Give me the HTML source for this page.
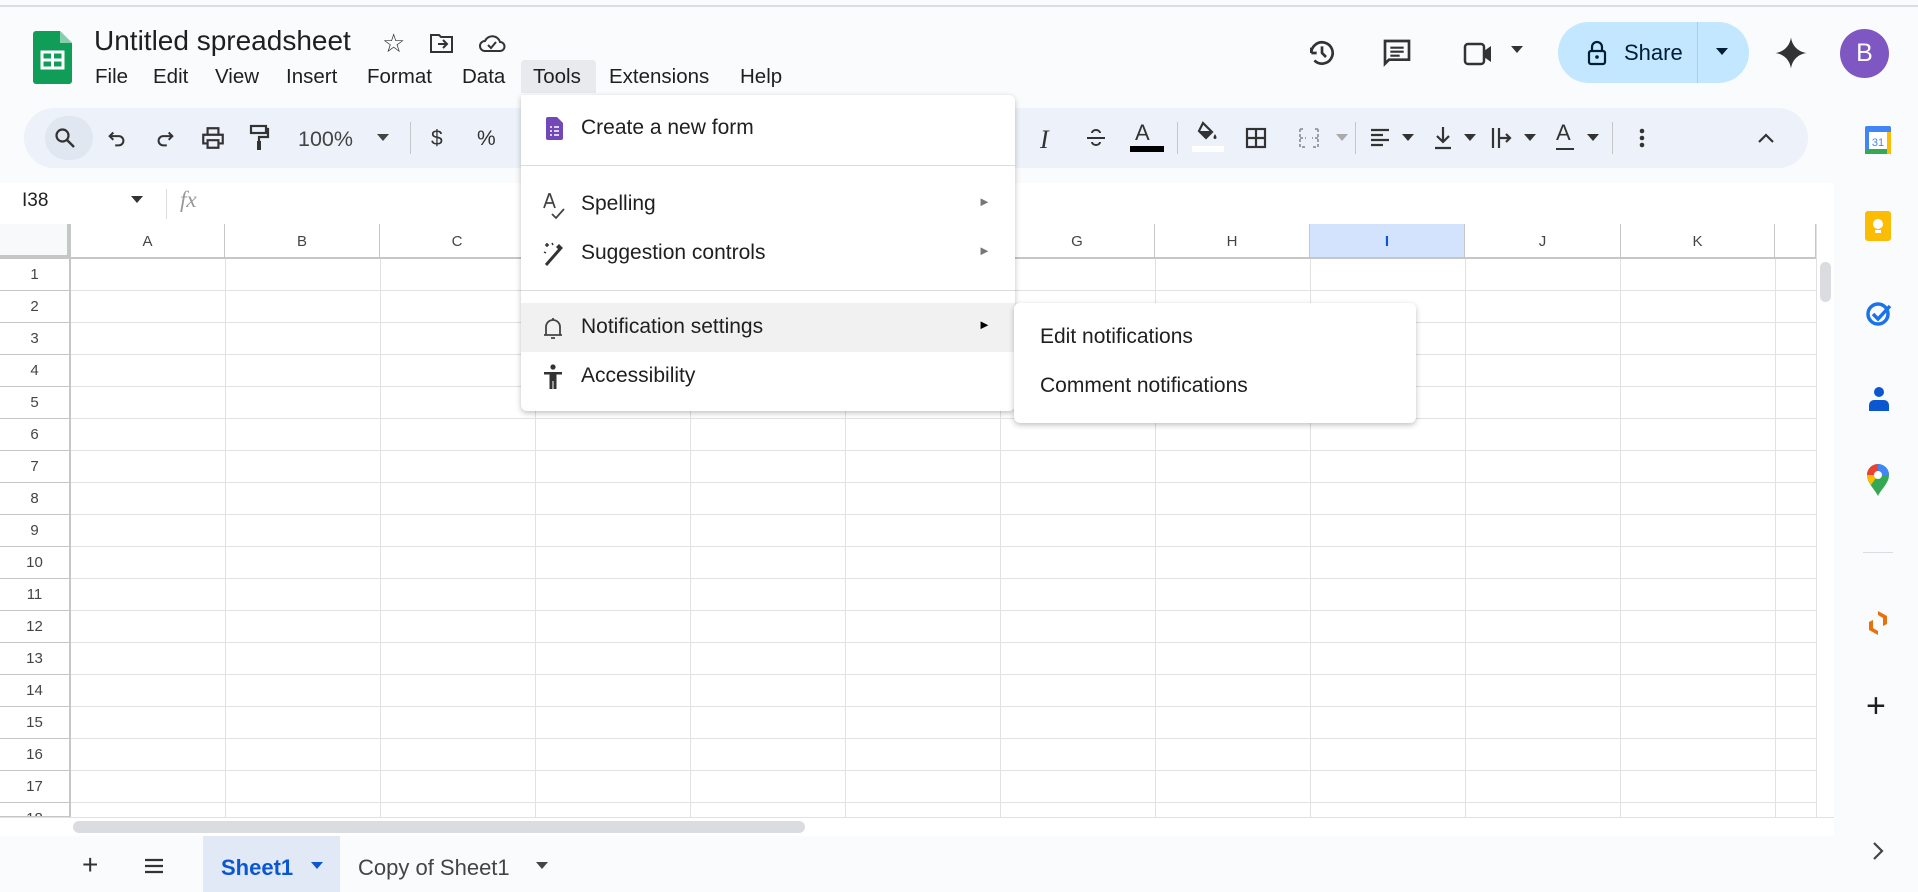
<!DOCTYPE html>
<html><head><meta charset="utf-8"><style>
*{box-sizing:border-box;margin:0;padding:0}
body{width:1918px;height:892px;overflow:hidden;background:#f9fbfd;font-family:"Liberation Sans",Arial,sans-serif;color:#1f1f1f;position:relative}
.a{position:absolute}
.menu span{position:absolute;top:65px;font-size:20.5px;color:#1f1f1f}
.tb{position:absolute;top:138px;transform:translate(-50%,-50%)}
.grid{position:absolute;left:71px;top:259px;width:1745px;height:558px;background:#fff;
background-image:repeating-linear-gradient(to right,transparent 0,transparent 154px,#e1e1e1 154px,#e1e1e1 155px),repeating-linear-gradient(to bottom,transparent 0,transparent 31px,#e1e1e1 31px,#e1e1e1 32px)}
.ch{position:absolute;top:224px;height:35px;font-size:15px;color:#444;text-align:center;line-height:35px;border-right:1px solid #c4c7c5;border-bottom:2px solid #c4c7c5;background:#fff}
.rh{position:absolute;left:0;width:71px;height:32px;font-size:15px;color:#444;text-align:center;line-height:31px;border-bottom:1px solid #c4c7c5;border-right:2px solid #c4c7c5;background:#fff}
.mi{position:absolute;left:0;width:100%;font-size:21px;color:#1f1f1f}
.mi b{font-weight:normal;position:absolute;left:60px}
</style></head><body>
<div class="a" style="left:0;top:5px;width:1918px;height:2px;background:#dadce0"></div>
<svg class="a" style="left:33px;top:31px" width="39" height="53" viewBox="0 0 39 53"><path d="M3 0h24l12 12v38a3 3 0 0 1-3 3H3a3 3 0 0 1-3-3V3a3 3 0 0 1 3-3z" fill="#0f9d58"/><path d="M27 0v12h12z" fill="#87ceac"/><rect x="9" y="21" width="21" height="16" fill="none" stroke="#fff" stroke-width="3"/><path d="M19.5 21v16M9 29h21" stroke="#fff" stroke-width="3"/></svg>
<div class="a" style="left:94px;top:25px;font-size:28px;color:#1f1f1f">Untitled spreadsheet</div>
<div class="a" style="left:382px;top:28px;font-size:26px;color:#333">☆</div>
<svg class="a" style="left:429px;top:32px" width="26" height="22" viewBox="0 0 26 22"><path d="M2 3h8l2 2h11v15H2z" fill="none" stroke="#333" stroke-width="2"/><path d="M9 12h9M14 8l4 4-4 4" fill="none" stroke="#333" stroke-width="2"/></svg>
<svg class="a" style="left:478px;top:31px" width="28" height="22" viewBox="0 0 28 22"><path d="M7 20a5 5 0 0 1 0-10 8 8 0 0 1 15 1 4.5 4.5 0 0 1 0 9z" fill="none" stroke="#333" stroke-width="2"/><path d="M10 14l3 3 5-6" fill="none" stroke="#333" stroke-width="2"/></svg>
<div class="a" style="left:521px;top:60px;width:75px;height:33px;background:#e8eaed;border-radius:4px 4px 0 0"></div>
<div class="menu"><span style="left:95px">File</span><span style="left:153px">Edit</span><span style="left:215px">View</span><span style="left:286px">Insert</span><span style="left:367px">Format</span><span style="left:462px">Data</span><span style="left:533px">Tools</span><span style="left:609px">Extensions</span><span style="left:740px">Help</span></div>
<svg class="a" style="left:1306px;top:37px" width="32" height="32" viewBox="0 0 24 24"><path d="M4 12a8 8 0 1 1 2.3 5.6M4 12V8M4 12H8" fill="none" stroke="#333" stroke-width="2"/><path d="M12 7v5l3 3" fill="none" stroke="#333" stroke-width="2"/></svg>
<svg class="a" style="left:1381px;top:37px" width="32" height="32" viewBox="0 0 24 24"><path d="M3 3h18v14H6l-3 3z" fill="none" stroke="#333" stroke-width="2"/><path d="M7 8h10M7 11h10M7 14h7" stroke="#333" stroke-width="1.6"/></svg>
<svg class="a" style="left:1463px;top:40px" width="34" height="28" viewBox="0 0 34 28"><rect x="2" y="4" width="19" height="20" rx="3" fill="none" stroke="#333" stroke-width="2.5"/><path d="M21 11l7-5v16l-7-5z" fill="#333"/></svg>
<div class="a" style="left:1511px;top:46px;border:6px solid transparent;border-top:7px solid #333"></div>
<div class="a" style="left:1558px;top:22px;width:191px;height:61px;background:#c2e7ff;border-radius:31px"></div>
<div class="a" style="left:1697px;top:22px;width:1px;height:61px;background:#a9cfe8"></div>
<svg class="a" style="left:1587px;top:40px" width="20" height="26" viewBox="0 0 20 26"><rect x="2" y="11" width="16" height="13" rx="2" fill="none" stroke="#001d35" stroke-width="2.2"/><path d="M5 11V7a5 5 0 0 1 10 0v4" fill="none" stroke="#001d35" stroke-width="2.2"/><circle cx="10" cy="17" r="1.8" fill="#001d35"/></svg>
<div class="a" style="left:1624px;top:40px;font-size:22px;color:#001d35">Share</div>
<div class="a" style="left:1716px;top:48px;border:6px solid transparent;border-top:7px solid #001d35"></div>
<svg class="a" style="left:1774px;top:35px" width="34" height="36" viewBox="0 0 24 24"><path d="M12 1C12.8 7 17 11.2 23 12 17 12.8 12.8 17 12 23 11.2 17 7 12.8 1 12 7 11.2 11.2 7 12 1z" fill="#333"/></svg>
<div class="a" style="left:1840px;top:29px;width:49px;height:49px;border-radius:50%;background:#7e57c2;color:#fff;font-size:25px;text-align:center;line-height:49px">B</div>
<div class="a" style="left:24px;top:108px;width:1784px;height:60px;background:#edf2fa;border-radius:30px"></div>
<div class="a" style="left:45px;top:116px;width:48px;height:44px;background:#e1e7f0;border-radius:22px"></div>
<svg class="tb" style="left:65px" width="24" height="24" viewBox="0 0 24 24"><circle cx="9.5" cy="9.5" r="6" fill="none" stroke="#333" stroke-width="2.2"/><path d="M14 14l7 7" stroke="#333" stroke-width="2.4"/></svg>
<svg class="tb" style="left:117px" width="22" height="22" viewBox="0 0 24 24"><path d="M8 6L4 10l4 4M4 10h10a5 5 0 0 1 0 10h-4" fill="none" stroke="#333" stroke-width="2.2"/></svg>
<svg class="tb" style="left:165px" width="22" height="22" viewBox="0 0 24 24"><path d="M16 6l4 4-4 4M20 10H10a5 5 0 0 0 0 10h4" fill="none" stroke="#333" stroke-width="2.2"/></svg>
<svg class="tb" style="left:213px" width="26" height="26" viewBox="0 0 24 24"><path d="M7 8V3h10v5M7 17H3V9h18v8h-4M7 14h10v7H7z" fill="none" stroke="#333" stroke-width="2"/></svg>
<svg class="tb" style="left:259px" width="22" height="28" viewBox="0 0 22 28"><rect x="3" y="2" width="15" height="7" fill="none" stroke="#333" stroke-width="2.2"/><path d="M18 5h2v8h-9v4" fill="none" stroke="#333" stroke-width="2.2"/><rect x="9" y="17" width="4" height="9" fill="#333"/></svg>
<div class="a" style="left:298px;top:127px;font-size:21.5px;color:#444">100%</div>
<div class="a" style="left:377px;top:134px;border:6px solid transparent;border-top:7px solid #444"></div>
<div class="a" style="left:410px;top:122px;width:1px;height:32px;background:#c7c7c7"></div>
<div class="a" style="left:431px;top:127px;font-size:21px;color:#333">$</div>
<div class="a" style="left:477px;top:127px;font-size:21px;color:#333">%</div>
<div class="a" style="left:1040px;top:125px;font-size:26px;font-style:italic;font-family:'Liberation Serif',serif;color:#333">I</div>
<svg class="tb" style="left:1096px" width="24" height="24" viewBox="0 0 24 24"><path d="M3 12h18M8 7a4 3 0 0 1 8 0M8 16a4 3 0 0 0 8 0" fill="none" stroke="#333" stroke-width="2"/></svg>
<div class="a" style="left:1135px;top:120px;font-size:22px;color:#333">A</div>
<div class="a" style="left:1130px;top:146px;width:34px;height:6px;background:#000"></div>
<div class="a" style="left:1177px;top:122px;width:1px;height:32px;background:#c7c7c7"></div>
<svg class="tb" style="left:1207px;top:133px" width="26" height="24" viewBox="0 0 26 24"><path d="M9 2l9 9-6 6-7-7z" fill="none" stroke="#333" stroke-width="2.2"/><path d="M5 10h13l-6 7z" fill="#333"/><path d="M21 13c-2 3-2 5 0 5s2-2 0-5z" fill="#333"/></svg>
<div class="a" style="left:1192px;top:146px;width:32px;height:6px;background:#fff"></div>
<svg class="tb" style="left:1256px" width="24" height="24" viewBox="0 0 24 24"><rect x="3" y="3" width="18" height="18" fill="none" stroke="#333" stroke-width="2.2"/><path d="M12 3v18M3 12h18" stroke="#333" stroke-width="2.2"/></svg>
<svg class="tb" style="left:1309px" width="24" height="24" viewBox="0 0 24 24"><path d="M3 3h5M3 3v18h5M21 3h-5M21 3v18h-5M3 12h6M21 12h-6" fill="none" stroke="#9aa0a6" stroke-width="2" stroke-dasharray="3 2"/></svg>
<div class="a" style="left:1336px;top:134px;border:6px solid transparent;border-top:7px solid #aaa"></div>
<div class="a" style="left:1355px;top:122px;width:1px;height:32px;background:#c7c7c7"></div>
<svg class="tb" style="left:1380px" width="24" height="24" viewBox="0 0 24 24"><path d="M3 4h18M3 9h12M3 14h18M3 19h12" stroke="#333" stroke-width="2.2"/></svg>
<div class="a" style="left:1402px;top:134px;border:6px solid transparent;border-top:7px solid #333"></div>
<svg class="tb" style="left:1443px" width="24" height="26" viewBox="0 0 24 26"><path d="M12 2v15M6 11l6 6 6-6M4 23h16" fill="none" stroke="#333" stroke-width="2.2"/></svg>
<div class="a" style="left:1464px;top:134px;border:6px solid transparent;border-top:7px solid #333"></div>
<svg class="tb" style="left:1502px" width="24" height="26" viewBox="0 0 24 26"><path d="M3 3v20M9 3v20M9 13h11M16 9l4 4-4 4" fill="none" stroke="#333" stroke-width="2.2"/></svg>
<div class="a" style="left:1524px;top:134px;border:6px solid transparent;border-top:7px solid #333"></div>
<div class="a" style="left:1556px;top:120px;font-size:22px;color:#333">A</div>
<div class="a" style="left:1556px;top:148px;width:18px;height:2px;background:#333"></div>
<div class="a" style="left:1587px;top:134px;border:6px solid transparent;border-top:7px solid #333"></div>
<div class="a" style="left:1612px;top:122px;width:1px;height:32px;background:#c7c7c7"></div>
<svg class="tb" style="left:1642px" width="8" height="24" viewBox="0 0 8 24"><circle cx="4" cy="5" r="2.3" fill="#333"/><circle cx="4" cy="12" r="2.3" fill="#333"/><circle cx="4" cy="19" r="2.3" fill="#333"/></svg>
<svg class="tb" style="left:1766px" width="20" height="14" viewBox="0 0 20 14"><path d="M3 11l7-7 7 7" fill="none" stroke="#333" stroke-width="2.2"/></svg>
<div class="a" style="left:0;top:183px;width:1834px;height:41px;background:#fff"></div>
<div class="a" style="left:22px;top:190px;font-size:19px;color:#1f1f1f">I38</div>
<div class="a" style="left:131px;top:196px;border:6px solid transparent;border-top:7px solid #333"></div>
<div class="a" style="left:166px;top:189px;width:1px;height:30px;background:#dadce0"></div>
<div class="a" style="left:180px;top:187px;font-size:23px;font-style:italic;font-family:'Liberation Serif',serif;color:#999">fx</div>
<div class="grid"></div>
<div class="a" style="left:0;top:224px;width:71px;height:35px;background:#f8f9fa;border-right:4px solid #c4c7c5;border-bottom:4px solid #c4c7c5"></div>
<div class="ch" style="left:71px;width:154px">A</div>
<div class="ch" style="left:225px;width:155px">B</div>
<div class="ch" style="left:380px;width:155px">C</div>
<div class="ch" style="left:535px;width:155px">D</div>
<div class="ch" style="left:690px;width:155px">E</div>
<div class="ch" style="left:845px;width:155px">F</div>
<div class="ch" style="left:1000px;width:155px">G</div>
<div class="ch" style="left:1155px;width:155px">H</div>
<div class="ch" style="left:1310px;width:155px;background:#d3e3fd;color:#0b57d0;font-weight:bold">I</div>
<div class="ch" style="left:1465px;width:156px">J</div>
<div class="ch" style="left:1621px;width:154px">K</div>
<div class="ch" style="left:1775px;width:41px"></div>
<div class="rh" style="top:259px">1</div><div class="rh" style="top:291px">2</div><div class="rh" style="top:323px">3</div><div class="rh" style="top:355px">4</div><div class="rh" style="top:387px">5</div><div class="rh" style="top:419px">6</div><div class="rh" style="top:451px">7</div><div class="rh" style="top:483px">8</div><div class="rh" style="top:515px">9</div><div class="rh" style="top:547px">10</div><div class="rh" style="top:579px">11</div><div class="rh" style="top:611px">12</div><div class="rh" style="top:643px">13</div><div class="rh" style="top:675px">14</div><div class="rh" style="top:707px">15</div><div class="rh" style="top:739px">16</div><div class="rh" style="top:771px">17</div><div class="rh" style="top:803px;height:14px;overflow:hidden">18</div>
<div class="a" style="left:1816px;top:224px;width:18px;height:593px;background:#fff;border-left:1px solid #e1e1e1"></div>
<div class="a" style="left:1820px;top:262px;width:11px;height:40px;background:#dadce0;border-radius:6px"></div>
<div class="a" style="left:0;top:817px;width:1834px;height:19px;background:#fff;border-top:1px solid #e1e1e1"></div>
<div class="a" style="left:73px;top:821px;width:732px;height:12px;background:#dadce0;border-radius:6px"></div>
<div class="a" style="left:0;top:836px;width:1834px;height:56px;background:#f9fbfd"></div>
<div class="a" style="left:82px;top:849px;font-size:28px;color:#333">+</div>
<svg class="a" style="left:143px;top:857px" width="22" height="18" viewBox="0 0 22 18"><path d="M2 3h18M2 9h18M2 15h18" stroke="#333" stroke-width="2.2"/></svg>
<div class="a" style="left:203px;top:836px;width:137px;height:56px;background:#e1e9f7"></div>
<div class="a" style="left:221px;top:855px;font-size:22px;color:#0b57d0;font-weight:bold">Sheet1</div>
<div class="a" style="left:311px;top:862px;border:6px solid transparent;border-top:7px solid #0b57d0"></div>
<div class="a" style="left:358px;top:855px;font-size:22px;color:#444">Copy of Sheet1</div>
<div class="a" style="left:536px;top:862px;border:6px solid transparent;border-top:7px solid #444"></div>
<div class="a" style="left:1834px;top:108px;width:84px;height:784px;background:#f9fbfd"></div>
<svg class="a" style="left:1865px;top:126px" width="26" height="28" viewBox="0 0 26 28"><rect x="0" y="0" width="26" height="28" rx="2" fill="#4285f4"/><rect x="4" y="6" width="18" height="17" fill="#fff"/><rect x="0" y="23" width="26" height="5" fill="#34a853"/><rect x="22" y="6" width="4" height="22" fill="#fbbc04"/><text x="13" y="20" font-size="11" text-anchor="middle" fill="#4285f4" font-family="Liberation Sans">31</text></svg>
<svg class="a" style="left:1865px;top:211px" width="26" height="30" viewBox="0 0 26 30"><rect width="26" height="30" rx="3" fill="#fbbc04"/><circle cx="13" cy="13" r="5" fill="#fff"/><rect x="10" y="19" width="6" height="3" fill="#fff"/></svg>
<svg class="a" style="left:1865px;top:300px" width="28" height="28" viewBox="0 0 28 28"><circle cx="13" cy="14" r="10" fill="none" stroke="#1a73e8" stroke-width="3.5"/><path d="M8 14l5 5 12-13" fill="none" stroke="#1a73e8" stroke-width="3.5"/></svg>
<svg class="a" style="left:1867px;top:385px" width="24" height="28" viewBox="0 0 24 28"><circle cx="12" cy="7" r="5" fill="#0b57d0"/><path d="M2 26v-6a5 5 0 0 1 5-5h10a5 5 0 0 1 5 5v6z" fill="#0b57d0"/></svg>
<svg class="a" style="left:1866px;top:463px" width="24" height="34" viewBox="0 0 24 34"><path d="M12 33C8 25 1 20 1 12a11 11 0 0 1 22 0c0 8-7 13-11 21z" fill="#34a853"/><path d="M1 12A11 11 0 0 1 12 1v7a4 4 0 0 0-4 4z" fill="#ea4335"/><path d="M12 1a11 11 0 0 1 11 11h-7a4 4 0 0 0-4-4z" fill="#4285f4"/><path d="M1 12c0 4 2 7 4 10l5-7a4 4 0 0 1-2-3z" fill="#fbbc04"/><circle cx="12" cy="12" r="4" fill="#fff"/></svg>
<div class="a" style="left:1863px;top:552px;width:30px;height:1px;background:#dadce0"></div>
<svg class="a" style="left:1866px;top:609px" width="24" height="28" viewBox="0 0 24 28"><path d="M12 2l9 5v8l-4 2V9l-5-3zM12 26l-9-5v-8l4-2v8l5 3z" fill="#e8710a"/></svg>
<div class="a" style="left:1866px;top:689px;font-size:34px;color:#1f1f1f;line-height:34px">+</div>
<svg class="a" style="left:1872px;top:841px" width="12" height="20" viewBox="0 0 12 20"><path d="M2 2l8 8-8 8" fill="none" stroke="#444" stroke-width="2.2"/></svg>
<div class="a" style="left:521px;top:95px;width:494px;height:316px;background:#fff;border-radius:0 6px 6px 6px;box-shadow:0 2px 6px rgba(0,0,0,.25)">
 <div class="mi" style="top:21px;height:24px"><svg class="a" style="left:25px;top:1px" width="17" height="23" viewBox="0 0 17 23"><path d="M2 0h9l6 6v15a2 2 0 0 1-2 2H2a2 2 0 0 1-2-2V2a2 2 0 0 1 2-2z" fill="#7248b9"/><path d="M4 10h2M8 10h5M4 14h2M8 14h5M4 18h2M8 18h5" stroke="#fff" stroke-width="1.6"/></svg><b>Create a new form</b></div>
 <div class="a" style="left:0;top:70px;width:494px;height:1px;background:#dadce0"></div>
 <div class="mi" style="top:97px;height:24px"><svg class="a" style="left:21px;top:0" width="24" height="28" viewBox="0 0 24 28"><path d="M2 16L7 2h1l5 14M4 11h7M10 22l4 4 8-9" fill="none" stroke="#444" stroke-width="1.8"/></svg><b>Spelling</b><span class="a" style="left:457px;top:2px;font-size:13px;color:#777">►</span></div>
 <div class="mi" style="top:146px;height:24px"><svg class="a" style="left:21px;top:0" width="24" height="26" viewBox="0 0 24 26"><path d="M4 24L18 8" stroke="#333" stroke-width="3"/><path d="M17 3l4 4-3 3-4-4z" fill="#333"/><path d="M3 4h4M5 2v4M10 2l1 2M2 11l2 1" stroke="#333" stroke-width="1.5"/></svg><b>Suggestion controls</b><span class="a" style="left:457px;top:2px;font-size:13px;color:#777">►</span></div>
 <div class="a" style="left:0;top:195px;width:494px;height:1px;background:#dadce0"></div>
 <div class="a" style="left:0;top:208px;width:494px;height:49px;background:#f1f1f1"></div>
 <div class="mi" style="top:220px;height:24px"><svg class="a" style="left:22px;top:0" width="20" height="26" viewBox="0 0 20 26"><path d="M3 20V12a7 7 0 0 1 14 0v8zM1 20h18M10 3v2M8 23h4" fill="none" stroke="#444" stroke-width="1.8"/></svg><b>Notification settings</b><span class="a" style="left:457px;top:2px;font-size:13px;color:#000">►</span></div>
 <div class="mi" style="top:269px;height:24px"><svg class="a" style="left:21px;top:0" width="22" height="26" viewBox="0 0 22 26"><circle cx="11" cy="3" r="2.6" fill="#333"/><path d="M2 8h18v2.5h-5.5V25h-3v-8h-1v8h-3V10.5H2z" fill="#333"/></svg><b>Accessibility</b></div>
</div>
<div class="a" style="left:1014px;top:303px;width:402px;height:120px;background:#fff;border-radius:6px;box-shadow:0 2px 6px rgba(0,0,0,.25)">
 <div class="a" style="left:26px;top:22px;font-size:21px">Edit notifications</div>
 <div class="a" style="left:26px;top:71px;font-size:21px">Comment notifications</div>
</div>
</body></html>
